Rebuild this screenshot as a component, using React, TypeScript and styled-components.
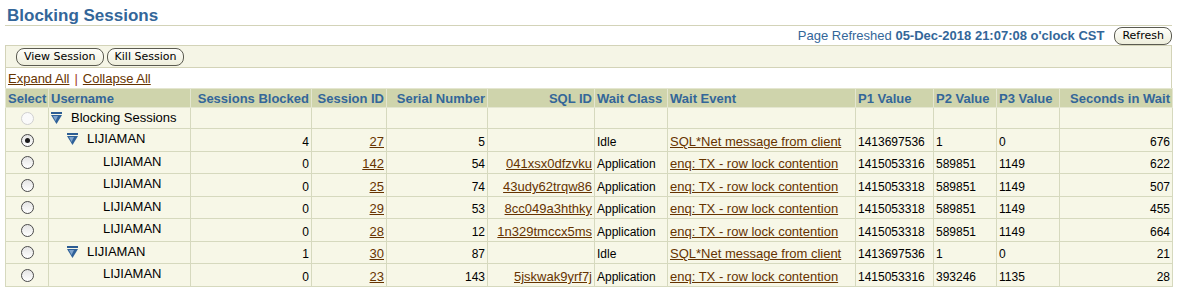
import React from "react";
import styled, { createGlobalStyle } from "styled-components";

const Global = createGlobalStyle`
  html, body { margin: 0; padding: 0; background: #ffffff; }
  body { font-family: "Liberation Sans", Arial, sans-serif; font-size: 12px; color: #000; }
`;

const Page = styled.div`
  width: 1167px;
  padding: 0 8px 0 5px;
`;

const Title = styled.h1`
  margin: 0;
  padding: 6px 0 0 2px;
  height: 19px;
  line-height: 19px;
  font-size: 17px;
  font-weight: bold;
  color: #336699;
  border-bottom: 1px solid #d3d3b8;
`;

const RefreshBar = styled.div`
  display: flex;
  justify-content: flex-end;
  align-items: center;
  gap: 10px;
  height: 19px;
`;

const RefreshText = styled.span`
  font-size: 13px;
  color: #336699;
  b { font-weight: bold; }
`;

const Btn = styled.button`
  font-family: "DejaVu Sans", Tahoma, sans-serif;
  font-size: 11px;
  height: 18px;
  padding: 0 7px;
  border: 1px solid #5a5a50;
  border-radius: 8px;
  background: linear-gradient(#fefefa, #eeeedc);
  color: #000;
  line-height: 16px;
  cursor: pointer;
`;

const Toolbar = styled.div`
  display: flex;
  gap: 3px;
  align-items: center;
  height: 21px;
  padding-left: 10px;
  background: #f5f5e6;
  border: 1px solid #d3d3b8;
  border-bottom: 1px solid #d3d3b8;
`;

const ExpandRow = styled.div`
  height: 19px;
  padding: 1px 0 0 2px;
  display: flex;
  align-items: center;
  gap: 5px;
  font-size: 13px;
  border-left: 1px solid #d3d3b8;
  border-right: 1px solid #d3d3b8;
`;

const Link = styled.a`
  color: #663300;
  text-decoration: underline;
  cursor: pointer;
`;

const CellLink = styled(Link)`
  font-size: 13px;
`;

const Sep = styled.span`
  color: #a04020;
`;

const Table = styled.table`
  width: 1167px;
  border-collapse: collapse;
  table-layout: fixed;
`;

const Th = styled.th<{ $align?: string }>`
  background: #cfd4ac;
  color: #336699;
  font-size: 13px;
  font-weight: bold;
  text-align: ${(p) => p.$align || "left"};
  padding: 0 2px;
  height: 18px;
  border: 1px solid #e4e6d0;
  white-space: nowrap;
  overflow: hidden;
`;

const Tr = styled.tr<{ $h: number }>`
  height: ${(p) => p.$h}px;
`;

const Td = styled.td<{ $align?: string }>`
  background: #f7f7e7;
  border: 1px solid #d6d9be;
  padding: 0 2px 1px;
  font-size: 12px;
  line-height: 15px;
  vertical-align: bottom;
  text-align: ${(p) => p.$align || "left"};
  white-space: nowrap;
  overflow: hidden;
`;

const SelectTd = styled(Td)<{ $mid?: boolean }>`
  text-align: center;
  vertical-align: ${(p) => (p.$mid ? "middle" : "bottom")};
  padding-bottom: ${(p) => (p.$mid ? 0 : 3)}px;
`;

const NameTd = styled(Td)<{ $level: number; $mid?: boolean }>`
  font-size: 13px;
  vertical-align: ${(p) => (p.$mid ? "middle" : "top")};
  padding-top: ${(p) => (p.$mid ? 0 : 2)}px;
  padding-left: ${(p) => 2 + p.$level * 16}px;
`;

const NameWrap = styled.div<{ $icon: boolean }>`
  display: flex;
  align-items: center;
  gap: 9px;
  padding-left: ${(p) => (p.$icon ? 0 : 20)}px;
`;

const Radio = styled.span<{ $checked?: boolean; $disabled?: boolean }>`
  display: inline-block;
  width: 11px;
  height: 11px;
  border-radius: 50%;
  border: 1px solid ${(p) => (p.$disabled ? "#d0d0d0" : "#4a4a4a")};
  background: ${(p) => (p.$disabled ? "#fafafa" : "linear-gradient(#e4e4e4, #ffffff)")};
  position: relative;
  vertical-align: middle;
  &::after {
    content: "";
    display: ${(p) => (p.$checked ? "block" : "none")};
    position: absolute;
    left: 3px;
    top: 3px;
    width: 5px;
    height: 5px;
    border-radius: 50%;
    background: #1a1a1a;
  }
`;

const TreeIcon = () => (
  <svg width="11" height="12" viewBox="0 0 11 12">
    <rect x="0" y="0" width="11" height="2" fill="#2d5d93" />
    <polygon points="0,3 11,3 5.5,12" fill="#2f6199" />
    <polygon points="2,4 7,4 4.5,9" fill="#7fa3cc" />
  </svg>
);

type Row = {
  sel: "disabled" | "checked" | "none";
  level: number;
  icon: boolean;
  name: string;
  blocked?: string;
  sid?: string;
  serial?: string;
  sql?: string;
  wclass?: string;
  wevent?: string;
  p1?: string;
  p2?: string;
  p3?: string;
  secs?: string;
  h: number;
};

const TX = "enq: TX - row lock contention";
const NET = "SQL*Net message from client";

const rows: Row[] = [
  { sel: "disabled", level: 0, icon: true, name: "Blocking Sessions", h: 21 },
  { sel: "checked", level: 1, icon: true, name: "LIJIAMAN", blocked: "4", sid: "27", serial: "5", wclass: "Idle", wevent: NET, p1: "1413697536", p2: "1", p3: "0", secs: "676", h: 23 },
  { sel: "none", level: 2, icon: false, name: "LIJIAMAN", blocked: "0", sid: "142", serial: "54", sql: "041xsx0dfzvku", wclass: "Application", wevent: TX, p1: "1415053316", p2: "589851", p3: "1149", secs: "622", h: 22 },
  { sel: "none", level: 2, icon: false, name: "LIJIAMAN", blocked: "0", sid: "25", serial: "74", sql: "43udy62trqw86", wclass: "Application", wevent: TX, p1: "1415053318", p2: "589851", p3: "1149", secs: "507", h: 23 },
  { sel: "none", level: 2, icon: false, name: "LIJIAMAN", blocked: "0", sid: "29", serial: "53", sql: "8cc049a3hthky", wclass: "Application", wevent: TX, p1: "1415053318", p2: "589851", p3: "1149", secs: "455", h: 22 },
  { sel: "none", level: 2, icon: false, name: "LIJIAMAN", blocked: "0", sid: "28", serial: "12", sql: "1n329tmccx5ms", wclass: "Application", wevent: TX, p1: "1415053318", p2: "589851", p3: "1149", secs: "664", h: 23 },
  { sel: "none", level: 1, icon: true, name: "LIJIAMAN", blocked: "1", sid: "30", serial: "87", wclass: "Idle", wevent: NET, p1: "1413697536", p2: "1", p3: "0", secs: "21", h: 22 },
  { sel: "none", level: 2, icon: false, name: "LIJIAMAN", blocked: "0", sid: "23", serial: "143", sql: "5jskwak9yrf7j", wclass: "Application", wevent: TX, p1: "1415053316", p2: "393246", p3: "1135", secs: "28", h: 23 },
];

const widths = [43, 142, 121, 75, 101, 107, 73, 188, 78, 63, 63, 113];

export default function App() {
  return (
    <Page>
      <Global />
      <Title>Blocking Sessions</Title>
      <RefreshBar>
        <RefreshText>
          Page Refreshed <b>05-Dec-2018 21:07:08 o'clock CST</b>
        </RefreshText>
        <Btn>Refresh</Btn>
      </RefreshBar>
      <Toolbar>
        <Btn>View Session</Btn>
        <Btn>Kill Session</Btn>
      </Toolbar>
      <ExpandRow>
        <Link>Expand All</Link>
        <Sep>|</Sep>
        <Link>Collapse All</Link>
      </ExpandRow>
      <Table>
        <colgroup>
          {widths.map((w, i) => (
            <col key={i} style={{ width: w }} />
          ))}
        </colgroup>
        <thead>
          <tr>
            <Th>Select</Th>
            <Th>Username</Th>
            <Th $align="right">Sessions Blocked</Th>
            <Th $align="right">Session ID</Th>
            <Th $align="right">Serial Number</Th>
            <Th $align="right">SQL ID</Th>
            <Th>Wait Class</Th>
            <Th>Wait Event</Th>
            <Th>P1 Value</Th>
            <Th>P2 Value</Th>
            <Th>P3 Value</Th>
            <Th $align="right">Seconds in Wait</Th>
          </tr>
        </thead>
        <tbody>
          {rows.map((r, i) => (
            <Tr key={i} $h={r.h}>
              <SelectTd $mid={r.sel === "disabled"}>
                <Radio $checked={r.sel === "checked"} $disabled={r.sel === "disabled"} />
              </SelectTd>
              <NameTd $level={r.level} $mid={r.level === 0}>
                <NameWrap $icon={r.icon}>
                  {r.icon && <TreeIcon />}
                  <span>{r.name}</span>
                </NameWrap>
              </NameTd>
              <Td $align="right">{r.blocked}</Td>
              <Td $align="right">{r.sid && <CellLink>{r.sid}</CellLink>}</Td>
              <Td $align="right">{r.serial}</Td>
              <Td $align="right">{r.sql && <CellLink>{r.sql}</CellLink>}</Td>
              <Td>{r.wclass}</Td>
              <Td>{r.wevent && <CellLink>{r.wevent}</CellLink>}</Td>
              <Td>{r.p1}</Td>
              <Td>{r.p2}</Td>
              <Td>{r.p3}</Td>
              <Td $align="right">{r.secs}</Td>
            </Tr>
          ))}
        </tbody>
      </Table>
    </Page>
  );
}
